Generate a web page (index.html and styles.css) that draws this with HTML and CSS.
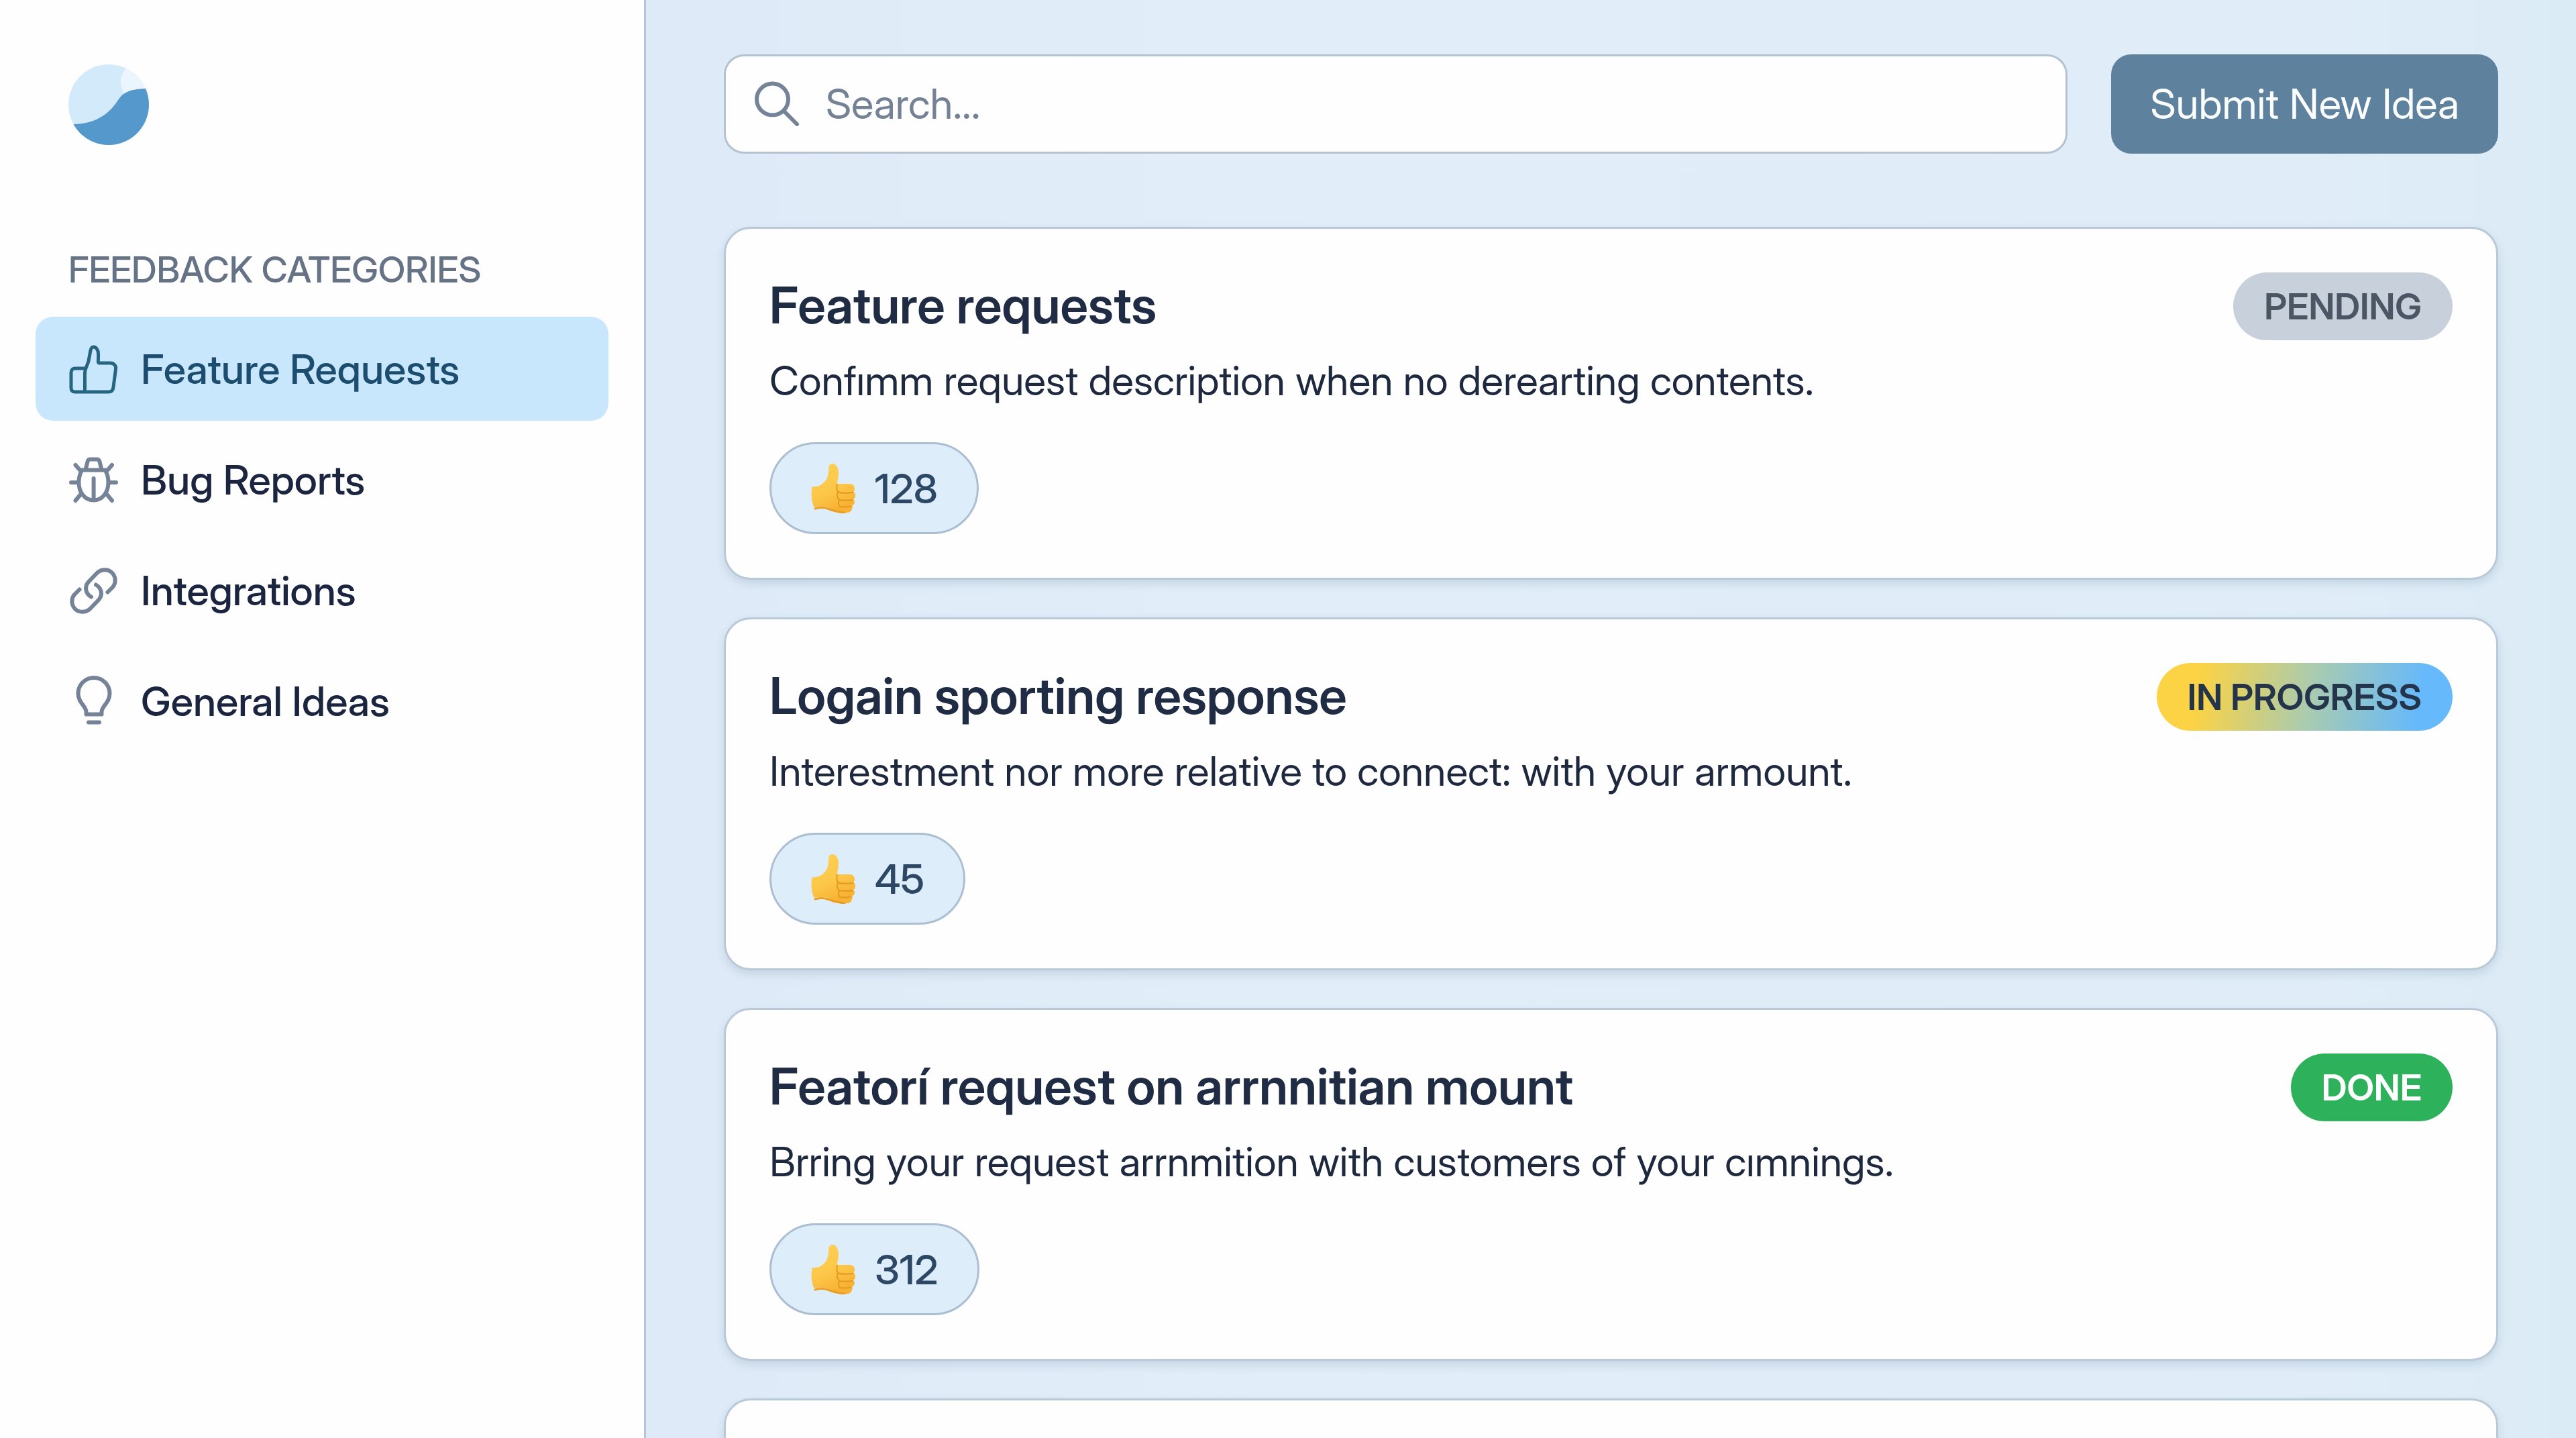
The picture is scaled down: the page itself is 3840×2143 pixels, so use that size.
FILE: index.html
```html
<!DOCTYPE html>
<html lang="en">
<head>
<meta charset="utf-8">
<meta name="viewport" content="width=device-width, initial-scale=1">
<title>Feedback</title>
<link rel="stylesheet" href="styles.css">
</head>
<body>
<svg class="defs" aria-hidden="true">
  <defs>
    <linearGradient id="skin" x1="0" y1="0" x2="0.4" y2="1">
      <stop offset="0" stop-color="#fdd054"/>
      <stop offset="0.6" stop-color="#fdc84a"/>
      <stop offset="1" stop-color="#f8b233"/>
    </linearGradient>
    <symbol id="thumb" viewBox="0 0 68 74">
      <path fill="url(#skin)" d="M3 34c8 1 14-2 19-8 4-5 5-10 5-17 0-6 2-9 6-9 6 0 9 7 9 15 0 6-2 10-2 15h18c5 0 8 3 8 7 0 3-1 4-2 5 2 1 3 3 3 5 0 3-1 5-3 6 1 1 2 3 2 4 0 3-2 5-4 5 1 1 1 3 0 5-1 4-3 6-8 6-10 0-16-2-22-5-5-3-9-4-13-4-5 0-9 0-13 1C2 60 0 44 3 34z"/>
      <path fill="none" stroke="#e39a20" stroke-width="2" stroke-linecap="round" d="M40 31c-1 4-1 8 1 11 4 2 14 2 23 1M41 43c-2 4-1 8 2 11 6 1 14 1 20 0M43 55c-2 3-1 6 1 9 5 1 10 1 16-1"/>
      <path fill="none" stroke="#ea9f22" stroke-width="3" stroke-linecap="round" d="M7 67c7-2 13-2 19 0 7 3 14 5 25 6"/>
    </symbol>
  </defs>
</svg>
<div class="app">
  <aside class="sidebar">
    <svg class="logo" viewBox="0 0 120 120" role="img" aria-label="Logo">
      <clipPath id="disc"><circle cx="60" cy="60" r="60"/></clipPath>
      <g clip-path="url(#disc)">
        <rect width="120" height="120" fill="#d3eafb"/>
        <path fill="#eaf5fe" d="M92 0C76 12 74 30 84 46L120 40V0z"/>
        <path fill="#5598cb" d="M0 89H8C28 89 46 83 61 69C72 59 76 47 84 43C92 38 102 36 120 36V120H0z"/>
      </g>
    </svg>
    <h2 class="sidebar-title">FEEDBACK CATEGORIES</h2>
    <nav class="nav" aria-label="Feedback categories">
      <a class="nav-item active" href="#feature-requests" aria-current="page">
        <svg class="icon" viewBox="0 0 72 72"><path d="M23.500 70V42C23.500 36 27 31 29 24L32 8c1-4 3-5 4.500-5 4 0 7 5 7 10v8c0 3-1 5 1 6h17c5 0 9 4 8 9l-3.500 27c-.5 5-3 7-7 7H9c-4 0-6-2-6-6V41c0-4 2.500-6 6-6h16"/></svg>
        Feature Requests
      </a>
      <a class="nav-item" href="#bug-reports">
        <svg class="icon" viewBox="0 0 72 72"><path d="M24.500 21L27.500 9c.6-2.500 2-3.500 4-3.500h10c2 0 3.400 1 4 3.500l3 12M19 21.500h35M19 22c-3.500 6-4.500 12-4.500 18 0 15 9 26.500 22 26.500s22-11.500 22-26.500c0-6-1-12-4.500-18M36.600 34v31M9.500 14l7 8M64 14l-7 8M3 40h10M60 40h10M9.500 67l7.500-9M64 67l-7.500-9"/></svg>
        Bug Reports
      </a>
      <a class="nav-item" href="#integrations">
        <svg class="icon" viewBox="0 0 72 72"><path d="M33 45.500C25 41 22 31 29 23L42 9.500C48 4 58 3.500 64 9.500S70 25 65 31L57.500 38.500M40 27.500C48 32 51 42 44 50L31 63.500C25 69 15 69.500 9 63.500S3 48 8 42L15.500 34.500"/></svg>
        Integrations
      </a>
      <a class="nav-item" href="#general-ideas">
        <svg class="icon" viewBox="0 0 72 72"><path d="M25.500 55.500V52C25.500 43 13.500 39 13.500 24.500a23.500 23.500 0 0 1 47 0C60.500 39 48.500 43 48.500 52V55.500zM29 67.500H45" /></svg>
        General Ideas
      </a>
    </nav>
  </aside>

  <main class="main">
    <header class="toolbar">
      <label class="search">
        <svg class="icon" viewBox="0 0 72 72" aria-hidden="true"><circle cx="29.500" cy="29" r="23.500"/><path d="M47 47L66 66"/></svg>
        <input class="search-input" type="search" placeholder="Search..." aria-label="Search">
      </label>
      <button class="submit" type="button">Submit New Idea</button>
    </header>

    <section class="cards" aria-label="Ideas">
      <article class="card">
        <div class="card-head">
          <h3 class="card-title">Feature requests</h3>
          <span class="badge pending">PENDING</span>
        </div>
        <p class="card-text">Confımm request description when no derearting contents.</p>
        <button class="vote" type="button" aria-label="Upvote, 128 votes"><svg class="thumb"><use href="#thumb"/></svg>128</button>
      </article>
      <article class="card">
        <div class="card-head">
          <h3 class="card-title">Logain sporting response</h3>
          <span class="badge progress">IN PROGRESS</span>
        </div>
        <p class="card-text">Interestment nor more relative to connect: with your armount.</p>
        <button class="vote" type="button" aria-label="Upvote, 45 votes"><svg class="thumb"><use href="#thumb"/></svg>45</button>
      </article>
      <article class="card">
        <div class="card-head">
          <h3 class="card-title">Featorí request on arrnnitian mount</h3>
          <span class="badge done">DONE</span>
        </div>
        <p class="card-text">Brring your request arrnmition with customers of your cımnings.</p>
        <button class="vote" type="button" aria-label="Upvote, 312 votes"><svg class="thumb"><use href="#thumb"/></svg>312</button>
      </article>
      <article class="card"></article>
    </section>
  </main>
</div>
</body>
</html>
```
FILE: styles.css
```css
*,
*::before,
*::after {
  box-sizing: border-box;
}

body {
  margin: 0;
  font-family: "Inter Display", Inter, "Liberation Sans", sans-serif;
  font-size: 61px;
  line-height: 80px;
  color: #1e293f;
}

h2,
h3,
p {
  margin: 0;
}

button,
input {
  font: inherit;
}

.defs {
  position: absolute;
  width: 0;
  height: 0;
}

.app {
  display: flex;
  height: 100vh;
  overflow: hidden;
}

/* Sidebar */
.sidebar {
  flex: none;
  width: 963px;
  padding: 96px 53px;
  border-right: 3px solid #b4c5d8;
  background: #fefefe;
}

.logo {
  display: block;
  width: 120px;
  height: 120px;
  margin: 0 0 146px 49px;
}

.sidebar-title {
  padding-left: 49px;
  margin-bottom: 30px;
  font-size: 54px;
  font-weight: 500;
  color: #667386;
}

.nav {
  display: flex;
  flex-direction: column;
  gap: 10px;
}

.nav-item {
  display: flex;
  align-items: center;
  gap: 35px;
  height: 155px;
  padding: 0 50px;
  border-radius: 26px;
  font-weight: 500;
  color: #1b2540;
  text-decoration: none;
}

.icon {
  flex: none;
  width: 72px;
  height: 72px;
  overflow: visible;
  fill: none;
  stroke: #758398;
  stroke-width: 6;
  stroke-linecap: round;
  stroke-linejoin: round;
}

.active {
  background: #c8e7fc;
  color: #1c4d6e;
}

.active .icon {
  stroke: #25657f;
  stroke-width: 5;
}

/* Main column */
.main {
  flex: 1;
  min-width: 0;
  padding: 81px 116px;
  overflow-y: auto;
  scrollbar-width: none;
  background: linear-gradient(90deg, #deeaf7, #e1edf8 30%, #e0edf8 85%, #dbebf6);
}

.toolbar {
  display: flex;
  gap: 65px;
  margin-bottom: 109px;
  font-size: 62px;
}

.search {
  flex: 1;
  display: flex;
  align-items: center;
  gap: 37px;
  height: 148px;
  padding: 0 40px;
  border: 3px solid #b5c3d1;
  border-radius: 30px;
  background: #fefefe;
}

.search-input {
  flex: 1;
  min-width: 0;
  padding: 0;
  border: 0;
  outline: 0;
  background: transparent;
  color: #1e293f;
}

.search-input::placeholder {
  color: #758195;
  opacity: 1;
}

.submit {
  height: 148px;
  padding: 0 58px;
  border: 0;
  border-radius: 30px;
  background: #5e819e;
  color: #fbfdff;
}

.cards {
  display: flex;
  flex-direction: column;
  gap: 56px;
}

.card {
  min-height: 525px;
  padding: 65px;
  border: 3px solid #bac9d7;
  border-radius: 40px;
  background: #fefefe;
  box-shadow: 0 6px 14px rgba(90, 120, 150, 0.2);
}

.card-head {
  display: flex;
  align-items: center;
  justify-content: space-between;
  gap: 40px;
  height: 101px;
}

.card-title {
  padding-bottom: 4px;
  font-size: 75px;
  font-weight: 600;
  color: #202c44;
}

.badge {
  flex: none;
  padding: 0 46px;
  border-radius: 51px;
  font-size: 54px;
  font-weight: 600;
  line-height: 101px;
}

.pending {
  background: #c8d1db;
  color: #4b5563;
}

.progress {
  background: linear-gradient(100deg, #fbd344 15%, #a9cbb0 52%, #66b9fb 88%);
  color: #24344a;
}

.done {
  background: #2db25b;
  color: #fff;
}

.card-text {
  margin: 20px 0 52px;
}

.vote {
  display: flex;
  align-items: center;
  gap: 28px;
  height: 137px;
  padding: 0 58px;
  border: 3px solid #acbfd2;
  border-radius: 69px;
  background: #ddedf9;
  font-weight: 500;
  color: #2c4865;
}

.thumb {
  width: 68px;
  height: 74px;
}
```
